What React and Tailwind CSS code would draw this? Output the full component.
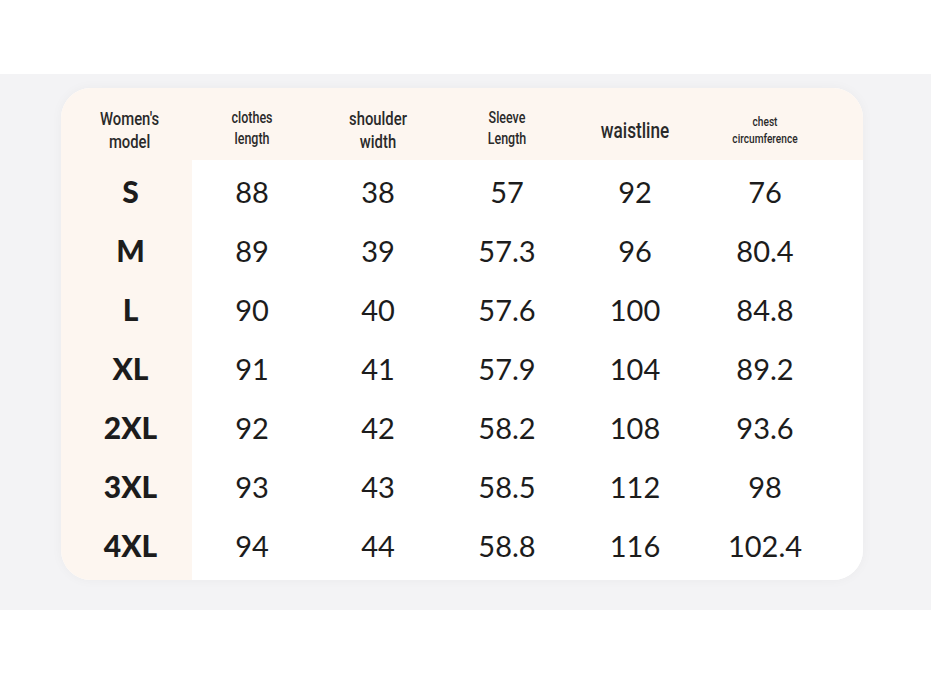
const rows = [
  ['S', '88', '38', '57', '92', '76'],
  ['M', '89', '39', '57.3', '96', '80.4'],
  ['L', '90', '40', '57.6', '100', '84.8'],
  ['XL', '91', '41', '57.9', '104', '89.2'],
  ['2XL', '92', '42', '58.2', '108', '93.6'],
  ['3XL', '93', '43', '58.5', '112', '98'],
  ['4XL', '94', '44', '58.8', '116', '102.4'],
]

const cols = 'grid grid-cols-[131px_120px_132px_126px_130px_130px_1fr]'
const cond = 'origin-center scale-x-[0.78] font-medium font-["Roboto",sans-serif]'

export default function App() {
  return (
    <div className="h-[699px] w-[931px] bg-white">
      <div className="h-[74px]" />
      <div className="h-[536px] bg-[#f3f3f5] px-[61px] pt-[14px]">
        <div className="h-[492px] w-[802px] overflow-hidden rounded-[30px] bg-white shadow-[0_0_12px_rgba(0,0,0,0.04)]">
          <div className={`${cols} h-[72px] items-center bg-[#fdf6f0] pt-[12px] text-center text-[#2a2a2a]`}>
            <div className={`${cond} pl-2 text-[19px] leading-[23px]`}>Women's<br />model</div>
            <div className={`${cond} -mt-[4px] text-[16px] leading-[21px]`}>clothes<br />length</div>
            <div className={`${cond} text-[19px] leading-[23px]`}>shoulder<br />width</div>
            <div className={`${cond} -mt-[4px] text-[16px] leading-[21px]`}>Sleeve<br />Length</div>
            <div className={`${cond} text-[22px]`}>waistline</div>
            <div className={`${cond} -mt-[1px] text-[13px] leading-[17px]`}>chest<br />circumference</div>
            <div />
          </div>
          <div className="h-[420px] bg-[linear-gradient(to_right,#fdf6f0_131px,#ffffff_131px)] pt-[2px] font-['Lato',sans-serif] text-[#1c1c1c]">
            {rows.map((r) => (
              <div key={r[0]} className={`${cols} h-[59px] items-center text-center`}>
                <div className="pl-2 text-[30px] font-black">{r[0]}</div>
                {r.slice(1).map((v, i) => (
                  <div key={i} className="text-[29px]">{v}</div>
                ))}
                <div />
              </div>
            ))}
          </div>
        </div>
      </div>
    </div>
  )
}
